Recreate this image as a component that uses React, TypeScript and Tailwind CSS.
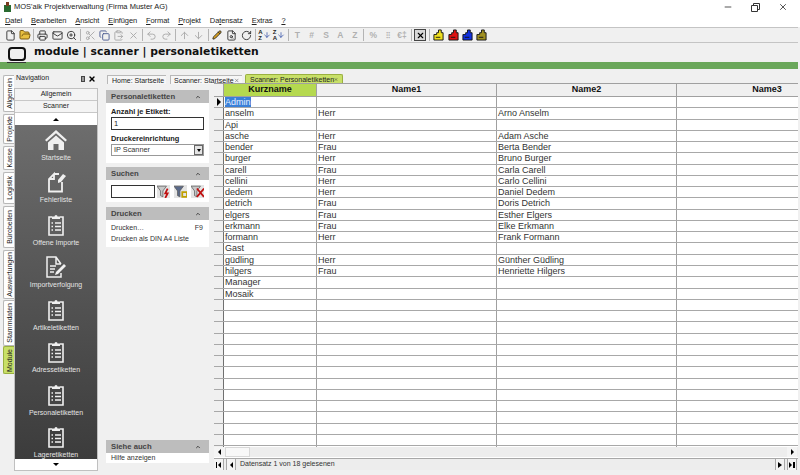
import React from "react";
import {
  ArrowDown, ArrowUp, ChevronUp, ClipboardPaste, Copy, File, FileSearch,
  FolderOpen, Mail, Minus, Pencil, Printer, Redo2, RotateCw, Scissors, Undo2, X, ZoomIn,
} from "lucide-react";

const menu = [
  ["", "D", "atei"], ["", "B", "earbeiten"], ["", "A", "nsicht"], ["", "E", "infügen"], ["", "F", "ormat"], ["", "P", "rojekt"], ["Da", "t", "ensatz"], ["", "E", "xtras"], ["", "?", ""],
];

const rows = [
  ["Admin", "", ""],
  ["anselm", "Herr", "Arno Anselm"],
  ["Api", "", ""],
  ["asche", "Herr", "Adam Asche"],
  ["bender", "Frau", "Berta Bender"],
  ["burger", "Herr", "Bruno Burger"],
  ["carell", "Frau", "Carla Carell"],
  ["cellini", "Herr", "Carlo Cellini"],
  ["dedem", "Herr", "Daniel Dedem"],
  ["detrich", "Frau", "Doris Detrich"],
  ["elgers", "Frau", "Esther Elgers"],
  ["erkmann", "Frau", "Elke Erkmann"],
  ["formann", "Herr", "Frank Formann"],
  ["Gast", "", ""],
  ["güdling", "Herr", "Günther Güdling"],
  ["hilgers", "Frau", "Henriette Hilgers"],
  ["Manager", "", ""],
  ["Mosaik", "", ""],
  ...Array.from({ length: 13 }, () => ["", "", ""]),
];

const Tool = ({ children }: { children?: React.ReactNode }) => (
  <div className="w-[14.4px] h-[14px] flex items-center justify-center shrink-0">{children}</div>
);

const Sep = () => <div className="w-px h-[12px] bg-[#b4b4b4] mx-[1.5px] shrink-0" />;

const Letter = ({ c }: { c: string }) => (
  <Tool>
    <span className="text-[8.5px] text-[#b0b0b0] font-bold whitespace-nowrap">{c}</span>
  </Tool>
);

const Plug = ({ color }: { color: string }) => (
  <Tool>
    <svg width="11" height="12" viewBox="0 0 12 13">
      <path d="M1 6h3V4h2V1h3v3h2v8H1z" fill={color} stroke="#111" strokeWidth="1" />
      <path d="M3 9h5" stroke="#111" strokeWidth="1" />
    </svg>
  </Tool>
);

const Toolbar = () => {
  const grey = "w-[11px] h-[11px] text-[#a8a8a8]";
  const dark = "w-[11px] h-[11px] text-[#333333]";
  return (
    <div className="h-[16px] border-y border-[#c4c4c4] flex items-center pl-[3px] mr-[2px] bg-[#f0f0f0]">
      <Tool><File className={dark} /></Tool>
      <Tool><FolderOpen className="w-[12px] h-[12px] text-[#7a5a10] fill-[#e8c040]" /></Tool>
      <Sep />
      <Tool><Printer className={dark} /></Tool>
      <Tool><Mail className={dark} /></Tool>
      <Tool><ZoomIn className={dark} /></Tool>
      <Sep />
      <Tool><Scissors className={grey} /></Tool>
      <Tool><Copy className="w-[11px] h-[11px] text-[#4a5a90]" /></Tool>
      <Tool><ClipboardPaste className={grey} /></Tool>
      <Tool><X className={grey} /></Tool>
      <Sep />
      <Tool><Undo2 className={grey} /></Tool>
      <Tool><Redo2 className={grey} /></Tool>
      <Sep />
      <Tool><ArrowUp className={grey} /></Tool>
      <Tool><ArrowDown className={grey} /></Tool>
      <Sep />
      <Tool><Pencil className="w-[10px] h-[10px] text-[#222222] fill-[#d8a020]" /></Tool>
      <Tool><FileSearch className={dark} /></Tool>
      <Tool><RotateCw className={dark} /></Tool>
      <Sep />
      <Tool>
        <span className="flex items-center leading-[6px] text-[6px] font-bold text-[#222222]">
          <span className="flex flex-col"><span>A</span><span>Z</span></span>
          <ArrowDown className="w-[8px] h-[10px] text-[#2040a0]" />
        </span>
      </Tool>
      <Tool>
        <span className="flex items-center leading-[6px] text-[6px] font-bold text-[#222222]">
          <span className="flex flex-col"><span>Z</span><span>A</span></span>
          <ArrowDown className="w-[8px] h-[10px] text-[#2040a0]" />
        </span>
      </Tool>
      <Sep />
      <Letter c="T" />
      <Letter c="#" />
      <Letter c="S" />
      <Letter c="A" />
      <Letter c="Z" />
      <Sep />
      <Letter c="%" />
      <Letter c="⁝⁝" />
      <Letter c="€‡" />
      <Sep />
      <Tool>
        <div className="w-[12px] h-[12px] border border-[#444444] bg-[#d8d8d8] flex items-center justify-center">
          <X className="w-[9px] h-[9px] text-black" strokeWidth={3} />
        </div>
      </Tool>
      <Sep />
      <Plug color="#f0e020" />
      <Plug color="#e01010" />
      <Plug color="#1030e0" />
      <Plug color="#a09020" />
    </div>
  );
};

const vtabs = [
  ["Allgemein", "h-[37px]", "mt-0"],
  ["Projekte", "h-[30px]", "mt-[2px]"],
  ["Kasse", "h-[24px]", "mt-[2px]"],
  ["Logistik", "h-[32px]", "mt-[2px]"],
  ["Bürobeiten", "h-[42px]", "mt-[2px]"],
  ["Auswertungen", "h-[49px]", "mt-[2px]"],
  ["Stammdaten", "h-[46px]", "mt-px"],
];

const VerticalTabs = () => (
  <div className="w-[11px] pt-[6px] flex flex-col shrink-0">
    {vtabs.map(([t, h, m]) => (
      <div key={t} className={`${h} ${m} shrink-0 bg-white border border-r-0 border-[#b8b8b8] rounded-l-[2px] flex items-center justify-center overflow-hidden`}>
        <span className="[writing-mode:vertical-rl] rotate-180 text-[7px] leading-none text-[#222222] whitespace-nowrap">{t}</span>
      </div>
    ))}
    <div className="h-[28px] shrink-0 bg-[#c8e068] border border-r-0 border-[#9ab040] rounded-l-[2px] flex items-center justify-center">
      <span className="[writing-mode:vertical-rl] rotate-180 text-[7px] leading-none text-[#222222]">Module</span>
    </div>
  </div>
);

const navItems = [
  ["Startseite", "home"],
  ["Fehlerliste", "note"],
  ["Offene Importe", "clip"],
  ["Importverfolgung", "pen"],
  ["Artikeletiketten", "clip"],
  ["Adressetiketten", "clip"],
  ["Personaletiketten", "clip"],
  ["Lageretiketten", "clip"],
];

const NavIcon = ({ kind }: { kind: string }) => {
  if (kind === "home") {
    return (
      <svg width="24" height="22" viewBox="0 0 24 22">
        <path d="M12 1 1 11l1.6 1.6L12 4.2l9.4 8.400L23 11z" fill="#f0f0f0" />
        <path d="M4 13.500 12 6.500l8 7V21h-5.500v-6h-5v6H4z" fill="#f0f0f0" />
      </svg>
    );
  }
  if (kind === "note") {
    return (
      <svg width="24" height="22" viewBox="0 0 24 22" fill="none">
        <path d="M10 3h5M18 11v9.500H5V8l5-5v5H5" stroke="#f0f0f0" strokeWidth="1.800" />
        <path d="m14 9 5-6 3 2-5 6-3 1z" fill="#f0f0f0" />
      </svg>
    );
  }
  if (kind === "pen") {
    return (
      <svg width="24" height="22" viewBox="0 0 24 22" fill="none">
        <path d="M17 8 12 1H3v20h14v-4M12 1v7h5" stroke="#f0f0f0" strokeWidth="1.500" />
        <path d="M6 10h6M6 13h5M6 16h4" stroke="#f0f0f0" strokeWidth="1.300" />
        <path d="m12 16 8-8 2 2-8 8-3 1z" fill="#f0f0f0" />
      </svg>
    );
  }
  return (
    <svg width="18" height="22" viewBox="0 0 18 22" fill="none">
      <path d="M5 3H2v18h14V3h-3" stroke="#f0f0f0" strokeWidth="1.600" />
      <path d="M5 4V2.500h2.500a1.500 1.500 0 0 1 3 0H13V5H5z" fill="#f0f0f0" />
      <path d="M4.500 9h1.500M8 9h6M4.500 12.500h1.500M8 12.500h6M4.500 16h1.500M8 16h6" stroke="#f0f0f0" strokeWidth="1.400" />
    </svg>
  );
};

const Navigation = () => (
  <div className="w-[84px] h-[399px] mt-[3px] flex flex-col shrink-0">
    <div className="h-[13px] flex items-center justify-between pl-[2px] pr-[2px] text-[7px] text-[#222222]">
      <span>Navigation</span>
      <span className="flex items-center gap-[3px]">
        <span className="w-[4px] h-[6px] border border-[#444444] bg-[#999999]" />
        <X className="w-[8px] h-[8px] text-black" strokeWidth={4} />
      </span>
    </div>
    <div className="flex-1 flex flex-col border border-[#c0c0c0] mt-[3px] min-h-0">
      <div className="h-[12px] border-b border-[#c8c8c8] flex items-center justify-center text-[7px] text-[#222222] bg-[#f4f4f4]">Allgemein</div>
      <div className="h-[12px] border-b border-[#c8c8c8] flex items-center justify-center text-[7px] text-[#222222] bg-[#f4f4f4]">Scanner</div>
      <div className="h-[12px] flex items-center justify-center bg-white">
        <div className="w-0 h-0 border-x-[3px] border-x-transparent border-b-[3px] border-b-black" />
      </div>
      <div className="flex-1 min-h-0 overflow-hidden bg-linear-to-b from-[#6d6d6d] to-[#3c3c3c] flex flex-col items-center pt-[3px]">
        {navItems.map(([label, kind]) => (
          <div key={label} className="h-[42.5px] shrink-0 flex flex-col items-center w-full">
            <div className="h-[23px] flex items-center justify-center"><NavIcon kind={kind} /></div>
            <span className="mt-[0.5px] text-[7px] leading-[11px] text-[#e4e4e4] whitespace-nowrap">{label}</span>
          </div>
        ))}
      </div>
      <div className="h-[11px] flex items-center justify-center bg-white">
        <div className="w-0 h-0 border-x-[3px] border-x-transparent border-t-[3px] border-t-black" />
      </div>
    </div>
  </div>
);

const Tabs = () => (
  <div className="h-[9px] mt-[6px] flex items-end pl-[7px] text-[7px] leading-none text-[#222222]">
    <div className="w-[59px] h-[9px] bg-[#f6f6f6] border-t border-l border-[#b8b8b8] flex items-center pl-[4px] whitespace-nowrap">Home: Startseite</div>
    <div className="w-[72px] h-[9px] ml-[4px] bg-[#f6f6f6] border-t border-l border-[#b8b8b8] flex items-center justify-between px-[3px] whitespace-nowrap">
      Scanner: Startseite <X className="w-[7px] h-[7px] text-[#666666]" strokeWidth={2.500} />
    </div>
    <div className="w-[98px] h-[10px] ml-[3px] bg-[#c8e068] border border-b-0 border-[#9ab040] rounded-t-[2px] flex items-center justify-between px-[4px] whitespace-nowrap">
      Scanner: Personaletiketten <X className="w-[7px] h-[7px] text-[#222222]" strokeWidth={2.500} />
    </div>
  </div>
);

const PanelHead = ({ title }: { title: string }) => (
  <div className="h-[13px] bg-[#bdbdbd] flex items-center justify-between pl-[5px] pr-[8px]">
    <span className="text-[7.7px] font-bold text-[#444444]">{title}</span>
    <ChevronUp className="w-[6px] h-[6px] text-[#444444]" strokeWidth={4} />
  </div>
);

const Funnel = ({ color, mark }: { color: string; mark: string }) => (
  <div className="w-[13px] h-[13px] flex items-center justify-center bg-[#e4e4e4]">
    <svg width="13" height="13" viewBox="0 0 11 11">
      <path d="M0 1h8L5 5v5L3 9V5z" fill={color} stroke="#555555" strokeWidth=".6" />
      <path d={mark} stroke={color === "#c8c8c8" ? "#c01010" : "#c0a000"} strokeWidth="1.500" fill="none" />
    </svg>
  </div>
);

const SidePanel = () => (
  <div className="w-[103px] ml-[6px] pt-[6px] h-[379px] flex flex-col shrink-0">
    <PanelHead title="Personaletiketten" />
    <div className="bg-white h-[60px] px-[5px] pt-[4px]">
      <div className="text-[7.4px] leading-[10px] font-bold text-[#222222]">Anzahl je Etikett:</div>
      <div className="h-[13px] border border-[#333333] text-[7.5px] leading-[11px] pl-[2px] text-[#222222]">1</div>
      <div className="mt-[4px] text-[7.4px] leading-[10px] font-bold text-[#222222]">Druckereinrichtung</div>
      <div className="h-[12px] border border-[#999999] flex items-center justify-between pl-[2px] text-[7.3px] text-[#333333]">
        IP Scanner
        <div className="w-[9px] h-[10px] bg-[#e4e4e4] border border-[#666666] flex items-center justify-center">
          <div className="w-0 h-0 border-x-[2.500px] border-x-transparent border-t-[3px] border-t-black" />
        </div>
      </div>
    </div>
    <div className="mt-[4px]"><PanelHead title="Suchen" /></div>
    <div className="bg-white h-[22px] px-[5px] flex items-center gap-[4px]">
      <div className="w-[44px] h-[13px] border border-[#333333] mr-[-2px]" />
      <Funnel color="#c8c8c8" mark="M9 3 7 7h2l-2 4" />
      <Funnel color="#5a6a8a" mark="M7 6h4v4H7z" />
      <Funnel color="#c8c8c8" mark="m5 3 6 7m0-7-6 7" />
    </div>
    <div className="mt-[5px]"><PanelHead title="Drucken" /></div>
    <div className="bg-white h-[27px] px-[5px] pt-[3px] text-[7px] leading-[10.500px] text-[#333333]">
      <div className="flex justify-between pr-[1px]"><span>Drucken…</span><span>F9</span></div>
      <div className="whitespace-nowrap">Drucken als DIN A4 Liste</div>
    </div>
    <div className="flex-1" />
    <PanelHead title="Siehe auch" />
    <div className="bg-white h-[10px] px-[5px] text-[7px] leading-[10px] text-[#333333]">Hilfe anzeigen</div>
  </div>
);

const Grid = () => (
  <div className="ml-[5px] w-[584px] h-[387px] -mt-px flex flex-col shrink-0 bg-white overflow-hidden">
    <div className="flex h-[12px] border-y border-[#a0a0a0] text-[9px] font-bold text-[#111111] leading-[10px] bg-[#f0f0f0] box-content">
      <div className="w-[10px] border-r border-[#a0a0a0] shrink-0" />
      <div className="w-[93px] bg-[#b5d94f] border-r border-[#a0a0a0] text-center shrink-0">Kurzname</div>
      <div className="w-[180px] border-r border-[#a0a0a0] text-center shrink-0">Name1</div>
      <div className="w-[180px] border-r border-[#a0a0a0] text-center shrink-0">Name2</div>
      <div className="w-[180px] text-center shrink-0">Name3</div>
    </div>
    <div className="flex flex-col">
      {rows.map((r, i) => (
        <div key={i} className="flex h-[11.27px] border-b border-[#a8a8a8] text-[9px] leading-[10px] text-[#333333]">
          <div className="w-[10px] bg-[#f0f0f0] border-r border-[#707070] shrink-0 flex items-center justify-center">
            {i === 0 && <div className="w-0 h-0 border-y-[4px] border-y-transparent border-l-[4px] border-l-black" />}
          </div>
          <div className="w-[93px] border-r border-[#a0a0a0] pl-px shrink-0 whitespace-nowrap">
            {i === 0 ? <span className="bg-[#3a80d8] text-[#e8f0ff]">{r[0]}</span> : r[0]}
          </div>
          <div className="w-[180px] border-r border-[#a0a0a0] pl-px shrink-0 whitespace-nowrap">{r[1]}</div>
          <div className="w-[180px] border-r border-[#a0a0a0] pl-px shrink-0 whitespace-nowrap">{r[2]}</div>
          <div className="flex-1" />
        </div>
      ))}
    </div>
    <div className="flex flex-1 min-h-0">
      <div className="w-[10px] bg-[#f0f0f0] border-r border-[#707070] shrink-0" />
      <div className="w-[93px] border-r border-[#a0a0a0] shrink-0" />
      <div className="w-[180px] border-r border-[#a0a0a0] shrink-0" />
      <div className="w-[180px] border-r border-[#a0a0a0] shrink-0" />
    </div>
    <div className="h-[10px] bg-[#ededed] flex items-center justify-between pr-px shrink-0">
      <div className="flex h-full">
        <div className="w-[11px] h-full bg-[#f4f4f4] flex items-center justify-center">
          <div className="w-0 h-0 border-y-[3px] border-y-transparent border-r-[3px] border-r-black" />
        </div>
        <div className="w-[25px] h-full bg-[#f8f8f8] border border-[#d8d8d8]" />
      </div>
      <div className="w-[10px] h-full bg-[#f4f4f4] flex items-center justify-center">
        <div className="w-0 h-0 border-y-[3px] border-y-transparent border-l-[3px] border-l-black" />
      </div>
    </div>
    <div className="h-[11px] mt-px bg-[#ededed] border-t border-[#a8a8a8] flex items-center text-[7px] text-[#333333] shrink-0 box-content">
      <div className="w-[10px] h-full bg-[#f4f4f4] border-r border-[#a8a8a8] flex items-center justify-center gap-[1px]">
        <div className="w-[1.500px] h-[6px] bg-black" />
        <div className="w-0 h-0 border-y-[3px] border-y-transparent border-r-[3px] border-r-black" />
      </div>
      <div className="w-[10px] ml-[2px] h-full bg-[#f4f4f4] border-x border-[#a8a8a8] flex items-center justify-center">
        <div className="w-0 h-0 border-y-[3px] border-y-transparent border-r-[3px] border-r-black" />
      </div>
      <span className="ml-[4px] flex-1">Datensatz 1 von 18 gelesenen</span>
      <div className="w-[10px] h-full bg-[#f4f4f4] border-x border-[#a8a8a8] flex items-center justify-center">
        <div className="w-0 h-0 border-y-[3px] border-y-transparent border-l-[4px] border-l-black" />
      </div>
      <div className="w-[10px] ml-[2px] mr-px h-full bg-[#f4f4f4] border-x border-[#a8a8a8] flex items-center justify-center gap-[1px]">
        <div className="w-0 h-0 border-y-[3px] border-y-transparent border-l-[3px] border-l-black" />
        <div className="w-[1.500px] h-[6px] bg-black" />
      </div>
    </div>
  </div>
);

export default function App() {
  return (
    <div className="w-[800px] h-[475px] overflow-hidden flex flex-col bg-[#f0f0f0] font-['Liberation_Sans',sans-serif]">
      <div className="h-[14px] bg-white flex items-center pl-[3px] text-[7.5px] text-[#222222] shrink-0">
        <svg width="9" height="11" viewBox="0 0 9 11" className="mr-[2px]">
          <rect x="1" y="3" width="7" height="7" fill="#2a6a30" />
          <rect x="3" y="0" width="3" height="4" fill="#7a3a20" />
        </svg>
        <span className="whitespace-nowrap">MOS'aik Projektverwaltung (Firma Muster AG)</span>
        <div className="ml-auto flex items-center gap-[18px] pr-[12px] text-[#333333]">
          <Minus className="w-[10px] h-[10px]" />
          <svg width="9" height="9" viewBox="0 0 9 9" fill="none" stroke="currentColor">
            <path d="M2.500 2.500v-2h6v6h-2M.5 2.500h6v6h-6z" />
          </svg>
          <X className="w-[10px] h-[10px]" />
        </div>
      </div>
      <div className="h-[13px] bg-white flex items-center pl-[5px] gap-[9px] text-[7.5px] tracking-[-0.1px] text-[#222222] shrink-0">
        {menu.map(([a, u, rest]) => (
          <span key={a + u + rest}>
            {a}
            <span className="underline">{u}</span>
            {rest}
          </span>
        ))}
      </div>
      <Toolbar />
      <div className="h-[19px] flex items-center pl-[8px] shrink-0">
        <div className="w-[18px] h-[14px] mt-[3px] border-2 border-[#111111] rounded-[4px]" />
        <span className="ml-[8px] text-[10.8px] font-bold text-[#111111] font-['DejaVu_Sans',sans-serif] whitespace-nowrap">
          module | scanner | personaletiketten
        </span>
      </div>
      <div className="h-[7px] mr-[2px] bg-[#6aa75a] shrink-0 pl-[7px]">
        <div className="w-[19px] h-px bg-[#333333]" />
      </div>
      <div className="flex-1 flex pl-[3px] min-h-0">
        <VerticalTabs />
        <Navigation />
        <div className="ml-[2px] flex-1 min-w-0 flex flex-col">
          <Tabs />
          <div className="flex">
            <SidePanel />
            <Grid />
          </div>
        </div>
      </div>
    </div>
  );
}
